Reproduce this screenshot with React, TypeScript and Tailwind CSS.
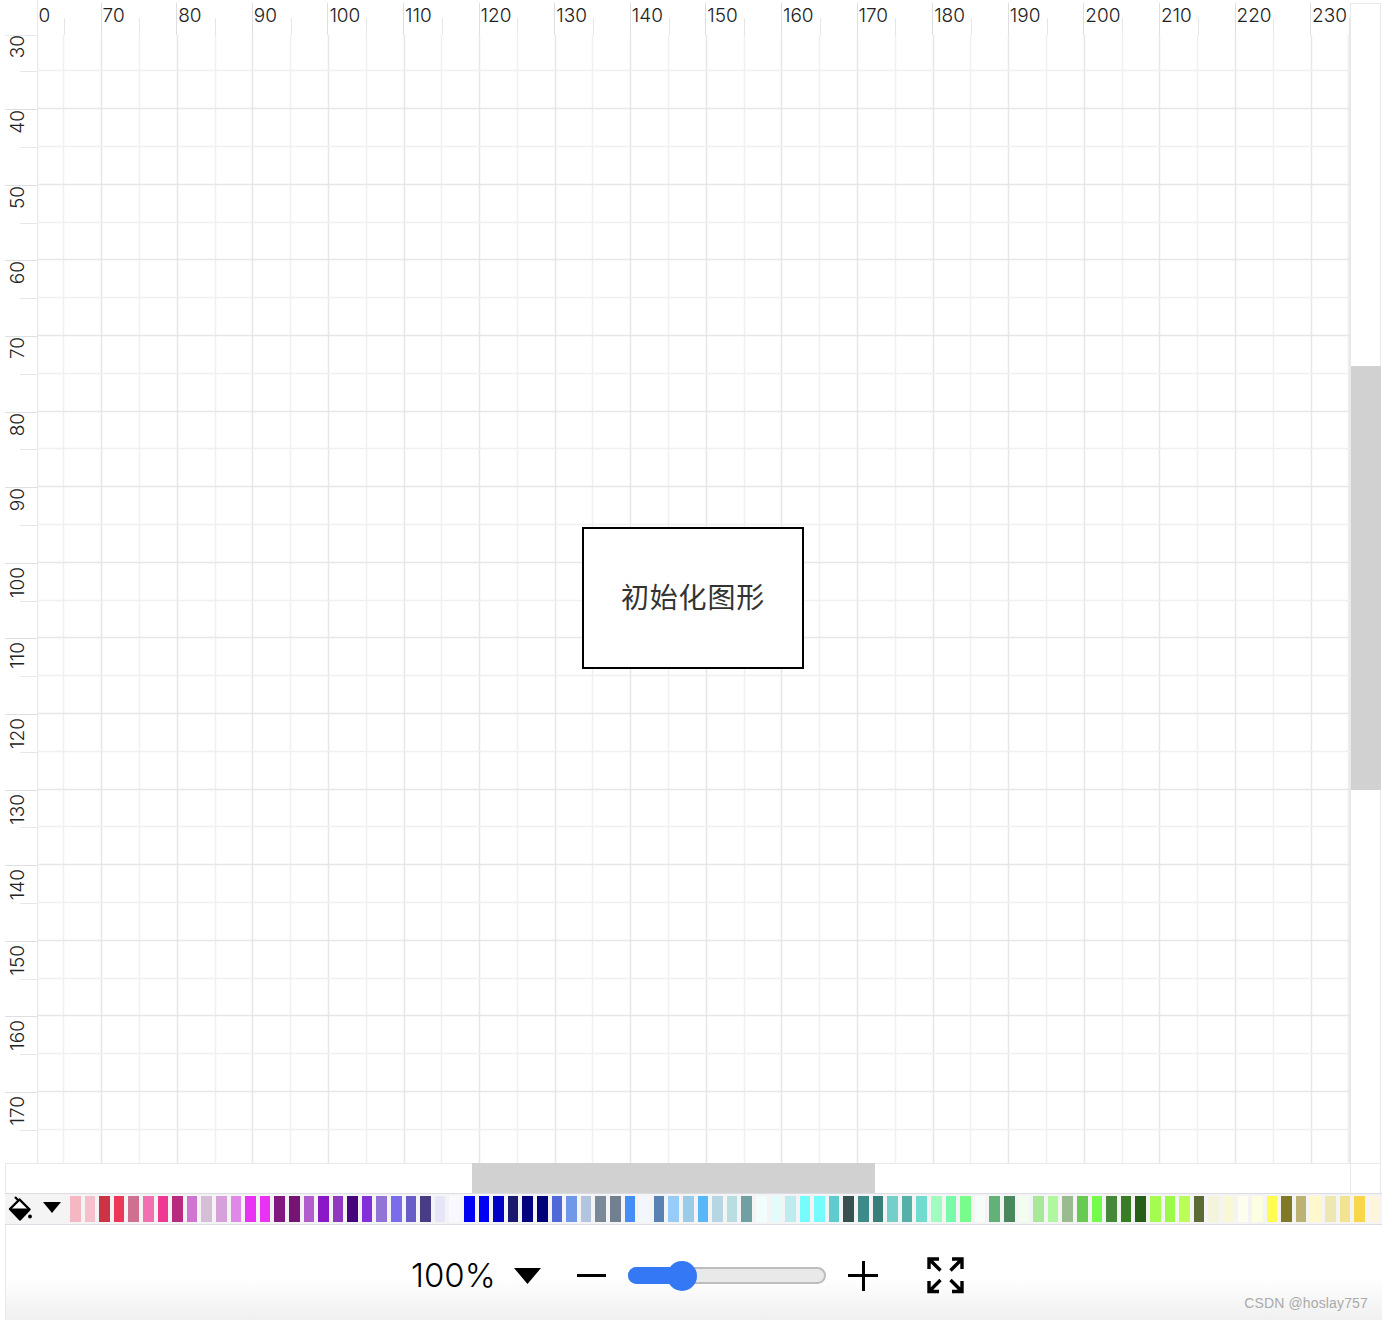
const xLabels = [60, 70, 80, 90, 100, 110, 120, 130, 140, 150, 160, 170, 180, 190, 200, 210, 220, 230];
const yLabels = [30, 40, 50, 60, 70, 80, 90, 100, 110, 120, 130, 140, 150, 160, 170];

// named css colours, in palette order
const swatches = [
  "bg-[#f5b8c2]", "bg-[#f5c0cb]", "bg-[#cc3344]", "bg-[#ee3658]", "bg-[#d07090]", "bg-[#f070b0]", "bg-[#ee3894]", "bg-[#b82a80]", "bg-[#cf74d0]",
  "bg-[#d5bfd6]", "bg-[#d6a0da]", "bg-[#e088e8]", "bg-[#ea32f4]", "bg-[#ea32f4]", "bg-[#801880]", "bg-[#761476]", "bg-[#b25cce]", "bg-[#8a18c8]",
  "bg-[#9038c0]", "bg-[#45067c]", "bg-[#8430da]", "bg-[#9174d6]", "bg-[#7a6cea]", "bg-[#675cc8]", "bg-[#483d84]", "bg-[#e6e6f8]", "bg-[#f8f8fe]",
  "bg-[#0000f5]", "bg-[#0000f5]", "bg-[#0000c8]", "bg-[#191a6e]", "bg-[#000080]", "bg-[#00007a]", "bg-[#4f6ad8]", "bg-[#7097e8]", "bg-[#b2c4de]",
  "bg-[#7a8898]", "bg-[#718090]", "bg-[#458ef5]", "bg-[#f2f7fe]", "bg-[#5882b4]", "bg-[#98ccf8]", "bg-[#9acce8]", "bg-[#56b8f8]", "bg-[#b6d6e4]",
  "bg-[#b8dee4]", "bg-[#70a0a2]", "bg-[#f2fefe]", "bg-[#e2fcfc]", "bg-[#beecee]", "bg-[#76fcfc]", "bg-[#76fcfc]", "bg-[#60cbcf]", "bg-[#385050]",
  "bg-[#3c8a8a]", "bg-[#387f7c]", "bg-[#72cfca]", "bg-[#54b0a8]", "bg-[#70dcd0]", "bg-[#9ffdc0]", "bg-[#78faaa]", "bg-[#78fc8c]", "bg-[#f6fdf9]",
  "bg-[#62b278]", "bg-[#48885c]", "bg-[#f2fdf0]", "bg-[#a8e898]", "bg-[#b0f8a0]", "bg-[#9aba90]", "bg-[#68ca50]", "bg-[#74fc4c]", "bg-[#448838]",
  "bg-[#387d24]", "bg-[#285f18]", "bg-[#a4fc50]", "bg-[#9bfa48]", "bg-[#bcfe58]", "bg-[#5c6a36]", "bg-[#f4f4dc]", "bg-[#f8f9d4]", "bg-[#fefef0]",
  "bg-[#fefee0]", "bg-[#fffd50]", "bg-[#807a26]", "bg-[#bcb274]", "bg-[#fef8cc]", "bg-[#eee8b0]", "bg-[#f0e490]", "bg-[#f8d84a]", "bg-[#fdf5dc]",
];

function GridLines() {
  const cols = Array.from({ length: 35 }, (_, i) => i);
  const rows = Array.from({ length: 30 }, (_, i) => i);
  return (
    <svg width="1313" height="1128" className="block">
      {cols.map((i) => {
        const x = Math.round(26.3 + i * 37.8) + 0.5;
        return <line key={i} x1={x} x2={x} y1="0" y2="1128" strokeWidth="1.5" stroke={i % 2 ? "#e7e7eb" : "#f0f0f3"} />;
      })}
      <line x1="0.5" x2="0.5" y1="0" y2="1128" strokeWidth="1.5" stroke="#e8e8ee" />
      <line x1="1312.5" x2="1312.5" y1="0" y2="1128" strokeWidth="1.5" stroke="#e8e8ee" />
      {rows.map((i) => {
        const y = Math.round(35.4 + i * 37.8) + 0.5;
        return <line key={i} x1="0" x2="1313" y1={y} y2={y} strokeWidth="1.5" stroke={i % 2 ? "#e7e7eb" : "#f0f0f3"} />;
      })}
    </svg>
  );
}

function BucketIcon() {
  return (
    <svg width="24" height="26" viewBox="0 0 24 26" className="block">
      <path d="M7 1 L11.5 5.5" stroke="#000" strokeWidth="2.2" fill="none" />
      <path d="M11.5 3.5 L21.5 13.5 L12 23.5 L2 13 Z" stroke="#000" strokeWidth="2.4" fill="#fff" strokeLinejoin="round" />
      <path d="M1 12.5 H22.5 L12 24.5 Z" fill="#000" />
      <circle cx="22" cy="20.5" r="1.9" fill="#000" />
    </svg>
  );
}

function ExpandIcon() {
  return (
    <svg width="38" height="37" viewBox="0 0 38 37" fill="none" stroke="#000" strokeWidth="3.4" className="block">
      <path d="M2 12 V2 H12 M2 2 L13.5 13.5" />
      <path d="M25 2 H35 V12 M35 2 L23.5 13.5" />
      <path d="M2 24 V34.5 H12 M2 34.5 L13.5 23" />
      <path d="M25 34.5 H35 V24 M35 34.5 L23.5 23" />
    </svg>
  );
}

export default function App() {
  return (
    <div className="relative w-[1382px] h-[1320px] pl-[5px] flex flex-col overflow-hidden bg-white font-['Inter',sans-serif]">
      <div className="flex h-[1193px]">
        <div className="w-[1345px] flex flex-col">
          {/* top ruler */}
          <div className="flex h-[35px]">
            <div className="w-[32px]" />
            <div className="w-[1313px] pt-[3px] overflow-hidden border-l border-[#e8e8ee]">
              <div className="flex w-[1400px] -ml-[13px]">
                {xLabels.map((n) => (
                  <div key={n} className="w-[75.6px] h-[32px] shrink-0 flex border-l border-[#dfdfe3]">
                    <div className="w-[37.8px] pl-[1px] -mt-[1px] text-[19px] leading-[28px] font-light text-[#222] whitespace-nowrap">{n}</div>
                    <div className="mt-[15px] h-[17px] border-l border-[#e6e6ea]" />
                  </div>
                ))}
              </div>
            </div>
          </div>

          <div className="flex h-[1128px]">
            {/* left ruler */}
            <div className="w-[32px] h-[1128px] overflow-hidden border-t border-[#e8e8ee]">
              <div className="-mt-[2.4px] flex flex-col">
                {yLabels.map((n) => (
                  <div key={n} className="h-[75.6px] shrink-0 flex flex-col border-t border-[#dfdfe3]">
                    <div className="h-[36.8px] flex">
                      <div className={`w-[26px] flex justify-center ${n >= 100 ? "pt-[3px]" : "pt-0"}`}>
                        <span className="[writing-mode:vertical-rl] rotate-180 h-fit text-[19px] leading-[24px] font-light text-[#222] whitespace-nowrap">{n}</span>
                      </div>
                    </div>
                    <div className="ml-[15px] border-t border-[#e6e6ea]" />
                  </div>
                ))}
              </div>
            </div>

            {/* canvas */}
            <div className="relative w-[1313px] h-[1128px]">
              <GridLines />
              <div className="absolute left-[545px] top-[492px] w-[222px] h-[142px] border-2 border-black bg-white flex items-center justify-center pb-[4px]">
                <span className="text-[28px] tracking-[0.8px] font-normal text-[#333] font-['Noto_Sans_CJK_SC',sans-serif]">初始化图形</span>
              </div>
            </div>
          </div>

          {/* horizontal scrollbar */}
          <div className="h-[30px] border-l border-t border-[#e8e8ee] pl-[466px]">
            <div className="w-[403px] h-[30px] -mt-px bg-[#d1d1d1]" />
          </div>
        </div>

        {/* vertical scrollbar */}
        <div className="w-[31px] mt-[3px] flex flex-col border-x border-t border-[#e8e8ee]">
          <div className="flex-1 pt-[362px]">
            <div className="h-[424px] -mr-px bg-[#d1d1d1]" />
          </div>
          <div className="h-[30px] border-t border-[#e8e8ee]" />
        </div>
      </div>

      {/* colour palette */}
      <div className="h-[32px] flex items-center border-y border-[#dcdce4] bg-[#f4f4f4]">
        <div className="w-[65px] shrink-0 flex items-center pl-[3px]">
          <BucketIcon />
          <svg width="18" height="11" viewBox="0 0 18 11" className="ml-[11px] mb-[4px]">
            <polygon points="0,0 18,0 9,11" fill="#000" />
          </svg>
        </div>
        <div className="flex gap-[4px]">
          {swatches.map((c, i) => (
            <div key={i} className={`w-[10.6px] h-[26px] shrink-0 ${c}`} />
          ))}
        </div>
      </div>

      {/* zoom bar */}
      <div className="relative flex-1 flex items-center pl-[405px] pt-[6px] border-l border-[#e8e8ee] bg-gradient-to-b from-white via-white via-[55%] to-[#f0f0f0]">
        <span className="w-[103px] text-[33px] leading-none font-light text-black">100%</span>
        <svg width="27" height="16" viewBox="0 0 27 16" className="shrink-0">
          <polygon points="0,0 27,0 13.5,16" fill="#000" />
        </svg>
        <div className="ml-[36px] w-[29px] h-[2.5px] bg-black shrink-0" />
        <div className="relative ml-[22px] w-[198px] h-[17px] flex rounded-full overflow-visible border-2 border-[#bdbdbd] bg-[#e9e9e9]">
          <div className="w-[54px] -m-[2px] h-[17px] rounded-l-full bg-[#3478f6]" />
          <div className="absolute left-[37px] -top-[8px] w-[30px] h-[30px] rounded-full bg-[#3478f6]" />
        </div>
        <div className="relative ml-[22px] w-[30px] h-[30px] shrink-0 flex items-center">
          <div className="w-[30px] h-[3px] bg-black" />
          <div className="absolute left-[14px] top-0 w-[3px] h-[30px] bg-black" />
        </div>
        <div className="ml-[49px] shrink-0">
          <ExpandIcon />
        </div>
        <span className="absolute right-[14px] bottom-[6px] text-[14px] tracking-[0.15px] text-[#aaa] font-['Liberation_Sans',sans-serif]">CSDN @hoslay757</span>
      </div>
    </div>
  );
}
